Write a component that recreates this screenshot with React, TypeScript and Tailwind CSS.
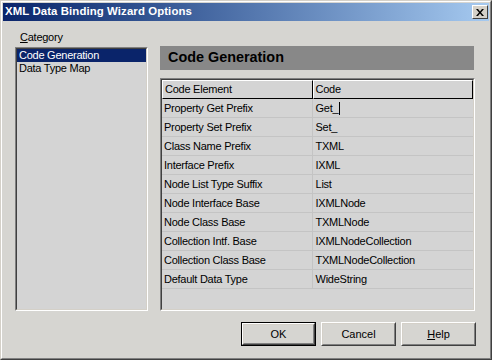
import React from 'react';

const rows: [string, string][] = [
  ['Property Get Prefix', 'Get_'],
  ['Property Set Prefix', 'Set_'],
  ['Class Name Prefix', 'TXML'],
  ['Interface Prefix', 'IXML'],
  ['Node List Type Suffix', 'List'],
  ['Node Interface Base', 'IXMLNode'],
  ['Node Class Base', 'TXMLNode'],
  ['Collection Intf. Base', 'IXMLNodeCollection'],
  ['Collection Class Base', 'TXMLNodeCollection'],
  ['Default Data Type', 'WideString'],
];

const font = { fontFamily: '"Liberation Sans", Arial, sans-serif' };

const Button = ({ children, isDefault }: { children: React.ReactNode; isDefault?: boolean }) => (
  <div className={`w-[75px] h-[24px] ${isDefault ? 'border border-black' : ''}`}>
    <div className="h-full border border-t-white border-l-white border-b-[#404040] border-r-[#404040]">
      <div className="h-full flex items-center justify-center border border-t-[#d4d0c8] border-l-[#d4d0c8] border-b-[#808080] border-r-[#808080] text-[11px] text-black">
        {children}
      </div>
    </div>
  </div>
);

const Sunken = ({ className, children }: { className: string; children: React.ReactNode }) => (
  <div className={`border border-t-[#808080] border-l-[#808080] border-b-white border-r-white ${className}`}>
    <div className="h-full border border-t-[#404040] border-l-[#404040] border-b-[#d4d0c8] border-r-[#d4d0c8] bg-[#d4d4d4] overflow-hidden">
      {children}
    </div>
  </div>
);

const App = () => {
  return (
    <div className="w-[492px] h-[360px] border border-t-[#d4d0c8] border-l-[#d4d0c8] border-b-[#404040] border-r-[#404040]" style={font}>
      <div className="h-full border border-t-white border-l-white border-b-[#808080] border-r-[#808080] bg-[#d6d5d1] p-px flex flex-col">
        {/* title bar */}
        <div className="h-[18px] flex items-center justify-between bg-gradient-to-r from-[#0a246a] to-[#a6caf0] pl-[2px] pr-[1px]">
          <span className="text-white font-bold text-[11.4px] tracking-[0.1px]">XML Data Binding Wizard Options</span>
          <div className="w-[16px] h-[14px] border border-t-white border-l-white border-b-[#404040] border-r-[#404040] bg-[#d4d0c8] flex items-center justify-center">
            <svg width="8" height="7" viewBox="0 0 8 7">
              <path d="M0 0h2l2 2.5L6 0h2L5 3.5 8 7H6L4 4.5 2 7H0l3-3.5z" fill="#000" />
            </svg>
          </div>
        </div>

        {/* body */}
        <div className="flex pl-[12px] pt-[10px] gap-[12px]">
          <div className="w-[133px] flex flex-col">
            <div className="h-[16px] text-[11px] tracking-[-0.25px] leading-[12px] pl-[5px] text-black">
              <span className="underline">C</span>ategory
            </div>
            <Sunken className="h-[264px]">
              <div className="text-[11px] tracking-[-0.25px] leading-[13px]">
                <div className="bg-[#0a246a] text-white pl-[2px] h-[13px]">Code Generation</div>
                <div className="text-black pl-[2px] h-[13px]">Data Type Map</div>
              </div>
            </Sunken>
          </div>

          <div className="w-[315px] flex flex-col pt-[15px]">
            <div className="h-[24px] mr-[1px] bg-[#888888] flex items-center pl-[8px] text-[14.4px] font-bold text-black">
              Code Generation
            </div>
            <Sunken className="mt-[8px] h-[233px]">
              <div className="text-[11px] tracking-[-0.25px] text-black">
                <div className="flex h-[19px]">
                  <div className="w-[151px] border border-t-white border-l-white border-b-black border-r-black flex items-center pl-[2px]">
                    Code Element
                  </div>
                  <div className="w-[161px] border border-t-white border-l-white border-b-black border-r-black flex items-center pl-[2px]">
                    Code
                  </div>
                </div>
                {rows.map(([k, v], i) => (
                  <div key={k} className="flex h-[19px] border-b border-[#c4c4c4]">
                    <div className="w-[151px] border-r border-[#c4c4c4] flex items-center pl-[2px]">{k}</div>
                    <div className="w-[161px] flex items-center pl-[3px]">
                      {v}
                      {i === 0 && <span className="w-px h-[13px] bg-black ml-[1px]" />}
                    </div>
                  </div>
                ))}
              </div>
            </Sunken>
          </div>
        </div>

        {/* buttons */}
        <div className="flex justify-end gap-[5px] pr-[13px] mt-[11px]">
          <Button isDefault>OK</Button>
          <Button>Cancel</Button>
          <Button>
            <span className="underline">H</span>elp
          </Button>
        </div>
      </div>
    </div>
  );
};

export default App;
